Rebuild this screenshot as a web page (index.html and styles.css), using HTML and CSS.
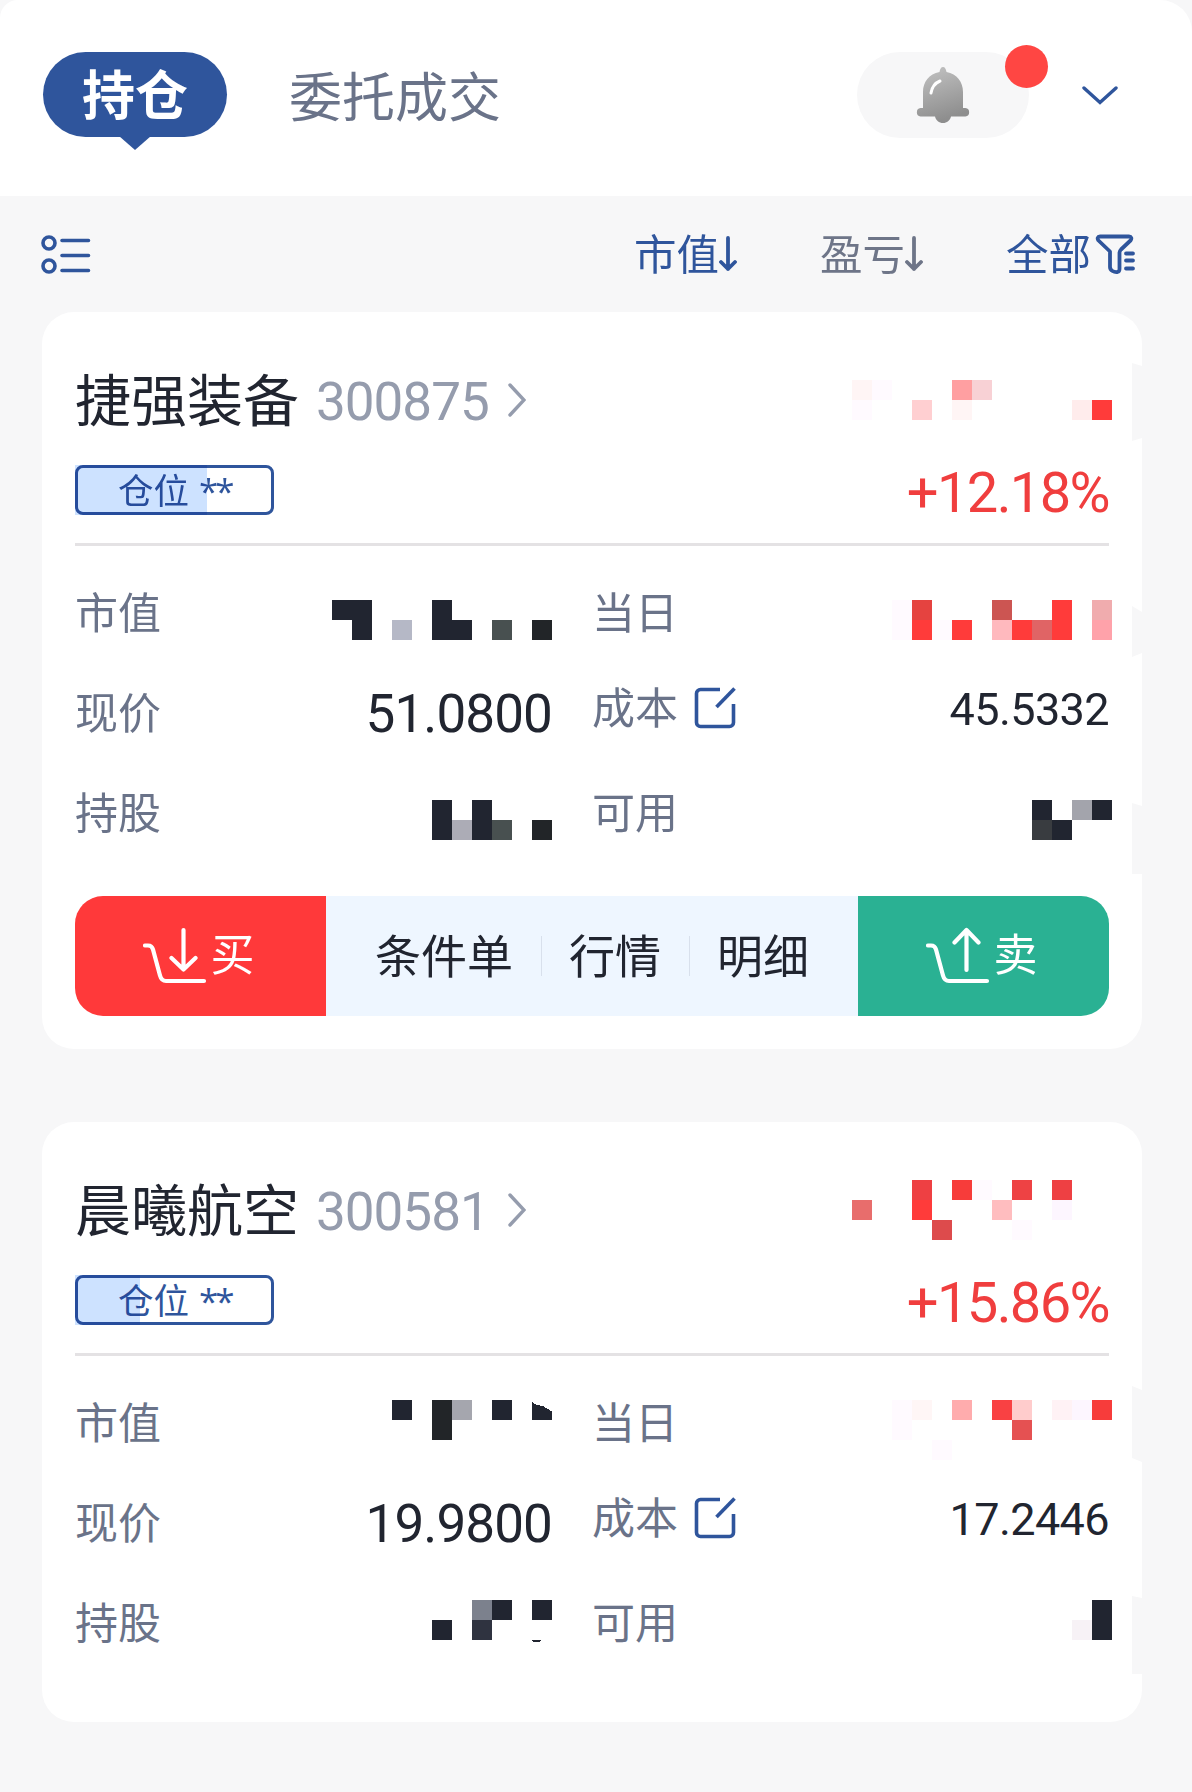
FILE: index.html
```html
<!DOCTYPE html>
<html lang="zh-CN">
  <head>
    <meta charset="UTF-8" />
    <meta name="viewport" content="width=device-width, initial-scale=1.0" />
    <title>持仓</title>
    <link rel="stylesheet" href="styles.css">
  </head>
  <body>
    <!-- Header tabs -->
    <header class="header">
      <div class="tab active"><span>持仓</span></div>
      <div class="tab"><span>委托成交</span></div>
      <div class="bell">
        <svg width="54" height="58" viewBox="0 0 54 58">
          <defs>
            <linearGradient id="bell-fill" x1="0" y1="0" x2="0.3" y2="1">
              <stop offset="0" stop-color="#c4c4c4" />
              <stop offset="1" stop-color="#8e8e8e" />
            </linearGradient>
          </defs>
          <path fill="url(#bell-fill)" d="M27 1c2 0 3 2 3.500 5C41 8 47 16 47 26v16h2.500a4.300 4.300 0 0 1 0 8.500H35c-1 4-4 6.500-8 6.500s-7-2.500-8-6.500H4.500a4.300 4.300 0 0 1 0-8.500H7V26C7 16 13 8 23.500 6 24 3 25 1 27 1z" />
          <path d="M15 27c1-6 4-10 9-12" fill="none" stroke="#fff" stroke-width="3" stroke-linecap="round" />
        </svg>
        <i class="dot"></i>
      </div>
      <svg class="chevron" width="36" height="20" viewBox="0 0 36 20">
        <path d="M2 2l16 14.500L34 2" />
      </svg>
    </header>

    <!-- Sort bar -->
    <div class="sort-bar">
      <svg class="list-icon" width="50" height="40" viewBox="0 0 50 40">
        <circle cx="8" cy="8" r="6" />
        <circle cx="8" cy="31" r="6" />
        <path d="M21 5.500h26.500M21 20.500h26.500M21 35.500h26.500" />
      </svg>
      <div class="sort on">
        <span>市值</span>
        <svg width="18" height="36" viewBox="0 0 18 36"><path d="M9 2v31M2 26l7 7 7-7" /></svg>
      </div>
      <div class="sort">
        <span>盈亏</span>
        <svg width="18" height="36" viewBox="0 0 18 36"><path d="M9 2v31M2 26l7 7 7-7" /></svg>
      </div>
      <div class="sort filter on">
        <span>全部</span>
        <svg width="40" height="40" viewBox="0 0 40 40">
          <path d="M24.500 18.500c0-1 .5-2 1.500-3L35.500 6.500c1.500-2 1-4-1.500-4H5c-2.500 0-3 2-1.500 4L15 17.500V33c0 3.500 4 5.500 7.500 5 1.500-.3 2-1 2-3zM31 19.500h7M31 26.500h7M31 34.500h7" />
        </svg>
      </div>
    </div>

    <!-- 捷强装备 -->
    <section class="card">
      <div class="title-row">
        <h2>捷强装备</h2>
        <span class="code num">300875</span>
        <svg class="arrow" width="18" height="34" viewBox="0 0 18 34"><path d="M2 2l14 15L2 32" /></svg>
        <svg class="mosaic red wide" viewBox="0 0 13 3">
          <rect x="0" y=".5" fill="#fff5f5" /><rect x="0" y="1.5" fill="#fffaff" />
          <rect x="1" y=".5" fill="#fffaff" /><rect x="3" y="1.5" fill="#ffcfd1" />
          <rect x="5" y=".5" fill="#ff9fa1" /><rect x="5" y="1.5" fill="#fff5f5" />
          <rect x="6" y=".5" fill="#f8d1d5" /><rect x="11" y="1.5" fill="#ffecec" />
          <rect x="12" y="1.5" />
        </svg>
      </div>
      <div class="rate-row">
        <div class="position"><i style="width: 132px"></i><span>仓位</span><b>**</b></div>
        <span class="rate num">+12.18%</span>
      </div>
      <div class="grid">
        <div class="cell">
          <label>市值</label>
          <svg class="mosaic" viewBox="0 0 11 3">
            <rect x="0" y=".5" /><rect x="1" y=".5" /><rect x="1" y="1.5" />
            <rect x="3" y="1.5" fill="#b5b8c6" />
            <rect x="5" y=".5" /><rect x="5" y="1.5" /><rect x="6" y="1.5" />
            <rect x="8" y="1.5" fill="#485050" /><rect x="10" y="1.5" fill="#222528" />
          </svg>
        </div>
        <div class="cell">
          <label>当日</label>
          <svg class="mosaic red wide" viewBox="0 0 13 3">
            <rect x="2" y=".5" fill="#fffaff" /><rect x="2" y="1.5" fill="#fffaff" />
            <rect x="3" y=".5" fill="#e54340" /><rect x="3" y="1.5" />
            <rect x="4" y="1.5" fill="#fffaff" /><rect x="5" y="1.5" />
            <rect x="7" y=".5" fill="#cc5552" /><rect x="7" y="1.5" fill="#ffb9be" />
            <rect x="8" y="1.5" /><rect x="9" y="1.5" fill="#e06465" />
            <rect x="10" y=".5" /><rect x="10" y="1.5" />
            <rect x="12" y=".5" fill="#f0acae" /><rect x="12" y="1.5" fill="#ffa2aa" />
          </svg>
        </div>
        <div class="cell">
          <label>现价</label>
          <span class="price num">51.0800</span>
        </div>
        <div class="cell cost">
          <label>成本</label>
          <svg class="edit" width="42" height="42" viewBox="0 0 42 42">
            <path d="M26 2.500H6.500a4 4 0 0 0-4 4v29a4 4 0 0 0 4 4h29a4 4 0 0 0 4-4V17" />
            <path d="M22.500 20L40.500 1.500" />
          </svg>
          <span class="num">45.5332</span>
        </div>
        <div class="cell">
          <label>持股</label>
          <svg class="mosaic" viewBox="0 0 11 3">
            <rect x="5" y=".5" /><rect x="5" y="1.5" /><rect x="6" y="1.5" fill="#acacb6" />
            <rect x="7" y=".5" /><rect x="7" y="1.5" />
            <rect x="8" y="1.5" fill="#485050" /><rect x="10" y="1.5" fill="#222528" />
          </svg>
        </div>
        <div class="cell">
          <label>可用</label>
          <svg class="mosaic wide" viewBox="0 0 13 3">
            <rect x="9" y=".5" /><rect x="9" y="1.5" fill="#393c40" /><rect x="10" y="1.5" />
            <rect x="11" y=".5" fill="#a3a4ac" /><rect x="12" y=".5" />
          </svg>
        </div>
      </div>
      <div class="actions">
        <button class="buy">
          <svg width="64" height="58" viewBox="0 0 64 58">
            <path d="M2 18.500h3q4 0 5 4l7 26q1.500 5.500 6 5.500h38M40.500 3v39M28.500 31l12 11.500 12-11.500" />
          </svg>
          <span>买</span>
        </button>
        <div class="links">
          <a>条件单</a>
          <a>行情</a>
          <a>明细</a>
        </div>
        <button class="sell">
          <svg width="64" height="58" viewBox="0 0 64 58">
            <path d="M2 18.500h3q4 0 5 4l7 26q1.500 5.500 6 5.500h38M40.500 43V3M28.500 15.500L40.500 3l12 12.500" />
          </svg>
          <span>卖</span>
        </button>
      </div>
      <svg class="notches" width="10" height="737" viewBox="0 0 10 737">
        <path d="M0 51l10 3v72l-10 3zM0 294l10 6v41l-10 4zM0 491l10 3v68H0z" />
      </svg>
    </section>

    <!-- 晨曦航空 -->
    <section class="card">
      <div class="title-row">
        <h2>晨曦航空</h2>
        <span class="code num">300581</span>
        <svg class="arrow" width="18" height="34" viewBox="0 0 18 34"><path d="M2 2l14 15L2 32" /></svg>
        <svg class="mosaic red wide" viewBox="0 0 13 3">
          <rect x="0" y="1" fill="#e86d6c" />
          <rect x="3" y="0" fill="#ee4043" /><rect x="3" y="1" /><rect x="4" y="2" fill="#dd4b4c" />
          <rect x="5" y="0" fill="#f73c3a" /><rect x="6" y="0" fill="#fffaff" />
          <rect x="7" y="1" fill="#ffbdbf" /><rect x="8" y="0" fill="#ee4244" />
          <rect x="8" y="2" fill="#fffaff" />
          <rect x="10" y="0" fill="#ee4043" /><rect x="10" y="1" fill="#fdf6ff" />
        </svg>
      </div>
      <div class="rate-row">
        <div class="position"><i style="width: 65px"></i><span>仓位</span><b>**</b></div>
        <span class="rate num">+15.86%</span>
      </div>
      <div class="grid">
        <div class="cell">
          <label>市值</label>
          <svg class="mosaic" viewBox="0 0 11 3">
            <rect x="3" y="0" /><rect x="5" y="0" fill="#222528" /><rect x="5" y="1" fill="#222528" />
            <rect x="6" y="0" fill="#a5a6ae" /><rect x="8" y="0" />
            <path d="M10 .1L10.250 .25 10.550 .3 11 .58V1h-1z" />
          </svg>
        </div>
        <div class="cell">
          <label>当日</label>
          <svg class="mosaic red wide" viewBox="0 0 13 3">
            <rect x="2" y="0" fill="#fffaff" /><rect x="2" y="1" fill="#fffaff" />
            <rect x="3" y="0" fill="#fff6f6" /><rect x="4" y="2" fill="#fffaff" />
            <rect x="5" y="0" fill="#ffacad" /><rect x="7" y="0" fill="#f94143" />
            <rect x="8" y="0" fill="#ffcccc" /><rect x="8" y="1" fill="#e55152" />
            <rect x="10" y="0" fill="#fff2f5" /><rect x="11" y="0" fill="#fdf6ff" />
            <rect x="12" y="0" fill="#f73c3b" />
          </svg>
        </div>
        <div class="cell">
          <label>现价</label>
          <span class="price num">19.9800</span>
        </div>
        <div class="cell cost">
          <label>成本</label>
          <svg class="edit" width="42" height="42" viewBox="0 0 42 42">
            <path d="M26 2.500H6.500a4 4 0 0 0-4 4v29a4 4 0 0 0 4 4h29a4 4 0 0 0 4-4V17" />
            <path d="M22.500 20L40.500 1.500" />
          </svg>
          <span class="num">17.2446</span>
        </div>
        <div class="cell">
          <label>持股</label>
          <svg class="mosaic" viewBox="0 0 11 3">
            <rect x="5" y="1" /><rect x="7" y="0" fill="#7c818d" /><rect x="7" y="1" fill="#2f3340" />
            <rect x="8" y="0" /><rect x="10" y="0" />
            <path d="M9.950 2h.55q-.25 .25-.55 0z" />
          </svg>
        </div>
        <div class="cell">
          <label>可用</label>
          <svg class="mosaic wide" viewBox="0 0 13 3">
            <rect x="11" y="1" fill="#f7f2f6" /><rect x="12" y="0" /><rect x="12" y="1" />
          </svg>
        </div>
      </div>
      <svg class="notches" width="10" height="600" viewBox="0 0 10 600">
        <path d="M0 264l10 4v72l-10-4zM0 474l10 2v76H0z" />
      </svg>
    </section>
  </body>
</html>
```
FILE: styles.css
```css
* {
  box-sizing: border-box;
}
body {
  margin: 0;
  background-color: #f7f7f8;
  color: #212530;
  font-family: "Noto Sans CJK SC", sans-serif;
  line-height: 1;
}
.num {
  font-family: Roboto, sans-serif;
}
svg {
  display: block;
  flex: none;
}

/* header */
.header {
  display: flex;
  align-items: flex-start;
  height: 196px;
  padding: 52px 74px 0 43px;
  background-color: #fff;
  border-radius: 18px 32px 0 0;
}
.tab {
  height: 85px;
  display: flex;
  align-items: center;
  justify-content: center;
  font-size: 53px;
  color: #6a7389;
}
.tab.active {
  position: relative;
  width: 184px;
  margin-right: 62px;
  padding-bottom: 4px;
  border-radius: 43px;
  background-color: #2f559c;
  color: #fff;
  font-weight: bold;
}
.tab.active::after {
  content: "";
  position: absolute;
  top: 84px;
  left: 76px;
  border: 16px solid transparent;
  border-top: 14px solid #2f559c;
  border-bottom: 0;
}
.bell {
  position: relative;
  display: flex;
  justify-content: center;
  width: 172px;
  height: 86px;
  margin-left: auto;
  padding-top: 14px;
  border-radius: 43px;
  background-color: #f7f7f8;
}
.dot {
  position: absolute;
  top: -7px;
  right: -19px;
  width: 43px;
  height: 43px;
  border-radius: 50%;
  background-color: #ff4643;
}
.chevron {
  margin: 34px 0 0 53px;
  fill: none;
  stroke: #2f559c;
  stroke-width: 3.4;
  stroke-linecap: round;
}

/* sort bar */
.sort-bar {
  display: flex;
  align-items: center;
  height: 116px;
  padding: 0 57px 0 41px;
  color: #6e7588;
  font-size: 42.5px;
}
.list-icon {
  margin: 2px auto 0 0;
  fill: none;
  stroke: #2f559c;
  stroke-width: 3.6;
  stroke-linecap: round;
}
.sort {
  display: flex;
  align-items: center;
  margin-left: 83px;
}
.sort span {
  margin-top: -4px;
}
.sort svg {
  fill: none;
  stroke: currentColor;
  stroke-width: 3.8;
  stroke-linecap: round;
  stroke-linejoin: round;
}
.filter svg {
  margin-left: 4px;
}
.on {
  color: #2f559c;
}

/* position cards */
.card {
  position: relative;
  width: 1100px;
  height: 600px;
  margin: 0 0 73px 42px;
  padding: 48px 33px 33px;
  border-radius: 32px;
  background-color: #fff;
}
.card:has(.actions) {
  height: 737px;
}
.title-row {
  display: flex;
  align-items: center;
  height: 80px;
}
h2 {
  margin: -6px 0 0;
  font-size: 56px;
  font-weight: normal;
}
.code {
  margin: 4px 0 0 17px;
  font-size: 53px;
  letter-spacing: -1px;
  color: #959cad;
}
.arrow {
  margin-left: 19px;
  fill: none;
  stroke: #959cad;
  stroke-width: 3.4;
  stroke-linecap: round;
}
.mosaic {
  width: 220px;
  height: 60px;
  margin: 14px 0 0 auto;
  fill: #212530;
  shape-rendering: crispEdges;
}
.mosaic rect {
  width: 1px;
  height: 1px;
}
.mosaic.wide {
  width: 260px;
  margin-right: -3px;
}
.mosaic.red {
  fill: #ff3b3a;
}
.title-row .mosaic {
  margin-top: 0;
}
.rate-row {
  display: flex;
  justify-content: space-between;
  height: 106px;
  padding-top: 25px;
  border-bottom: 3px solid #e4e2e4;
}
.position {
  position: relative;
  display: flex;
  width: 199px;
  height: 50px;
  padding: 3px 0 0 40px;
  border: 3px solid #2f559c;
  border-radius: 8px;
  color: #2f559c;
  font-size: 35.5px;
}
.position i {
  position: absolute;
  top: -3px;
  left: -3px;
  height: 50px;
  background-color: #cde2ff;
  mix-blend-mode: multiply;
}
.position b {
  margin: 2px 0 0 10px;
  font: 35px "Open Sans", sans-serif;
  line-height: 1;
  letter-spacing: -3px;
}
.rate {
  font-size: 56px;
  letter-spacing: -1.6px;
  color: #f03e3e;
}
.grid {
  display: grid;
  grid-template-columns: 477px 517px;
  grid-auto-rows: 100px;
  column-gap: 40px;
  margin: 17px 0 33px;
}
.cell {
  display: flex;
  align-items: center;
}
.cell label {
  margin-top: -6px;
  font-size: 43px;
  color: #6a7389;
}
.cell .num {
  margin: 3px 0 0 auto;
  font-size: 45px;
  letter-spacing: -0.6px;
}
.cell .price {
  font-size: 53px;
  letter-spacing: -0.9px;
}
.cost {
  padding-bottom: 10px;
}
.edit {
  margin-left: 16px;
  fill: none;
  stroke: #2f559c;
  stroke-width: 3.6;
}

/* buy / sell bar */
.actions {
  display: flex;
  height: 120px;
  border-radius: 28px;
  overflow: hidden;
}
.actions button {
  display: flex;
  align-items: center;
  justify-content: center;
  gap: 4px;
  width: 251px;
  border: 0;
  padding: 0 4px 0 0;
  font: 44px "Noto Sans CJK SC", sans-serif;
  line-height: 1;
  color: #fff;
}
.actions button span {
  margin-top: -8px;
}
.actions svg {
  fill: none;
  stroke: #fff;
  stroke-width: 4.2;
  stroke-linecap: round;
  stroke-linejoin: round;
}
.buy {
  background-color: #ff393a;
}
.sell {
  background-color: #2ab193;
}
.links {
  display: flex;
  flex: 1;
  align-items: center;
  justify-content: center;
  background-color: #eef6ff;
  font-size: 46px;
}
.links a {
  height: 40px;
  padding: 0 27.5px;
  line-height: 34px;
}
.links a + a {
  border-left: 1px solid #d8e0ec;
}
.notches {
  position: absolute;
  top: 0;
  right: 0;
  fill: #f7f7f8;
}
```
